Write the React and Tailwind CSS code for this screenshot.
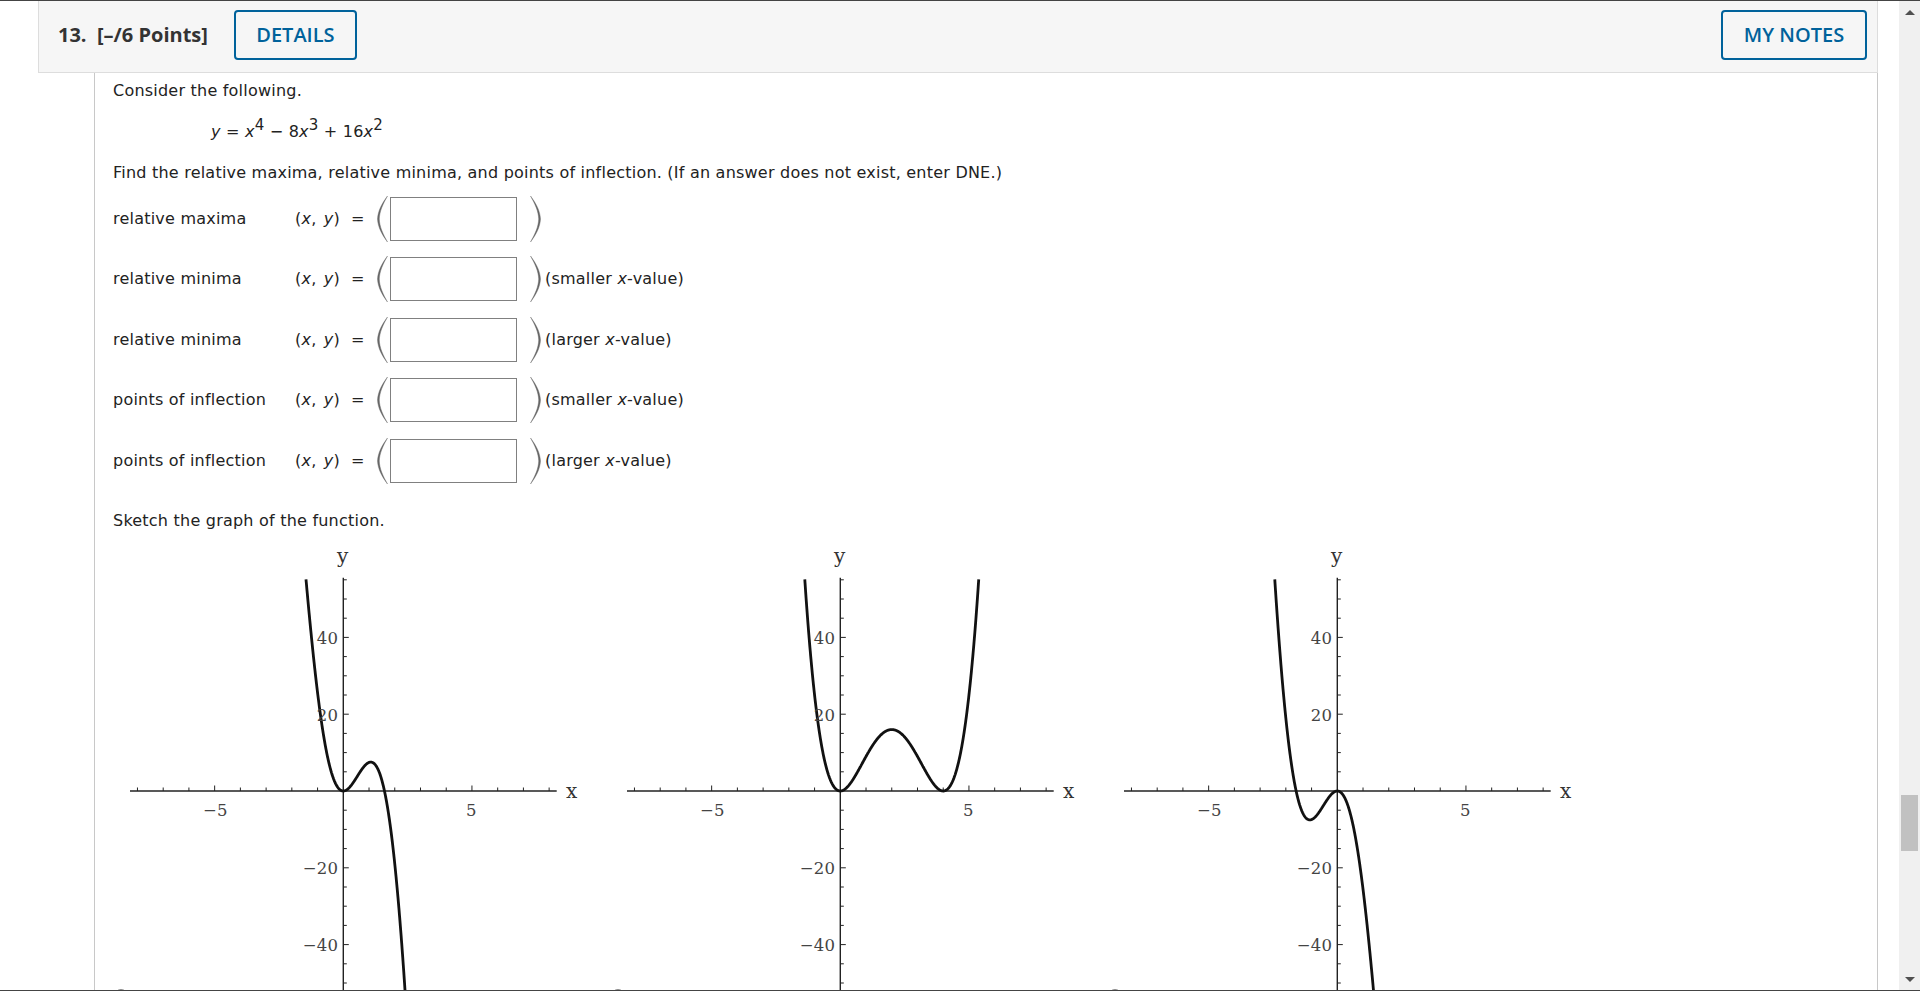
const xScale = 25.73
const yScale = 3.84
const originX = 230.3
const originY = 260

const range = (from, to, step) => {
  const out = []
  for (let v = from; v <= to + 1e-9; v += step) out.push(v)
  return out
}

// traced from the picture: x^2 (1.6 - x) (11.73 + 1.278x - 0.608x^2)
const leftHeavy = (x) => x * x * (1.6 - x) * (11.73 + 1.278 * x - 0.608 * x * x)

const curves = [
  { fn: leftHeavy, from: -1.7, to: 2.7 },
  { fn: (x) => x * x * (x - 4) * (x - 4), from: -1.7, to: 5.7 },
  { fn: (x) => -leftHeavy(-x), from: -2.7, to: 1.7 },
]

function curvePath({ fn, from, to }) {
  const pts = range(from, to, 0.01)
    .map((x) => [x, fn(x)])
    .filter(([, y]) => y <= 55.6)
    .map(([x, y]) => `${(originX + x * xScale).toFixed(2)},${(originY - y * yScale).toFixed(2)}`)
  return 'M' + pts.join('L')
}

function Graph({ curve }) {
  return (
    <div className="w-[497px] shrink-0">
      <svg width="497" height="458" viewBox="0 0 497 458" className="block overflow-visible">
        <g stroke="#222" fill="none">
          <line x1={originX - 213.3} y1={originY} x2={originX + 213.4} y2={originY} strokeWidth="1.4" />
          <line x1={originX} y1={46.7} x2={originX} y2={480} strokeWidth="1.4" />
          {range(-8, 8, 1).filter((t) => t !== 0).map((t) => (
            <line key={t} x1={originX + t * xScale} x2={originX + t * xScale} y1={originY} y2={originY - (Math.abs(t) === 5 ? 5.5 : 3.5)} strokeWidth="1" />
          ))}
          {range(-55, 55, 5).filter((t) => t !== 0).map((t) => (
            <line key={t} y1={originY - t * yScale} y2={originY - t * yScale} x1={originX} x2={originX + (Math.abs(t) % 20 === 0 ? 5.5 : 3.5)} strokeWidth="1" />
          ))}
        </g>
        <path d={curvePath(curve)} fill="none" stroke="#111" strokeWidth="2.8" strokeLinejoin="round" />
        <g className="font-['DejaVu_Serif',serif] text-[16.5px]" fill="#444">
          <text x={originX - 128} y={285} textAnchor="middle">−5</text>
          <text x={originX + 128} y={285} textAnchor="middle">5</text>
          {[40, 20, -20, -40].map((t) => (
            <text key={t} x={originX - 5} y={originY - t * yScale + 6.5} textAnchor="end">
              {t < 0 ? '−' + Math.abs(t) : t}
            </text>
          ))}
        </g>
        <g className="font-['DejaVu_Serif',serif] text-[20px]" fill="#333">
          <text x={originX - 0.6} y={32} textAnchor="middle">y</text>
          <text x={originX + 228.4} y={267} textAnchor="middle">x</text>
        </g>
      </svg>
      <input type="radio" className="block appearance-none ml-[1px] w-[14px] h-[14px] rounded-full border border-[#888] bg-white" />
    </div>
  )
}

function Paren({ right }) {
  return (
    <svg width="13" height="48" viewBox="0 0 13 48" className={right ? 'shrink-0 -scale-x-100' : 'shrink-0'}>
      <path
        d="M11.5 1C5.5 9 2 16 1.5 24C2 32 5.5 39 11.5 47C7 39 3.6 32 3.3 24C3.6 16 7 9 11.5 1Z"
        fill="#666"
        stroke="#666"
        strokeWidth="0.4"
      />
    </svg>
  )
}

function AnswerRow({ label, hint }) {
  return (
    <div className="flex items-center h-[60.5px]">
      <span className="w-[182px] shrink-0">{label}</span>
      <span className="w-[56px] shrink-0 whitespace-pre">
        (<i>x</i>, <i className="ml-[2px]">y</i>)
      </span>
      <span className="w-[25px] shrink-0">=</span>
      <Paren />
      <input type="text" className="ml-[1px] w-[127px] h-[44px] border border-[#808080] bg-white shrink-0" />
      <span className="ml-[12px]"><Paren right /></span>
      <span className="ml-[3px]">
        {hint && (
          <>
            ({hint} <i>x</i>-value)
          </>
        )}
      </span>
    </div>
  )
}

function OutlineButton({ children, className }) {
  return (
    <button className={`h-[50px] border-2 border-[#00629b] rounded-[4px] text-[#00629b] font-semibold text-[20px] ${className}`}>
      {children}
    </button>
  )
}

export default function App() {
  return (
    <div className="h-[991px] flex overflow-hidden bg-white border-y border-[#444] font-['DejaVu_Sans',sans-serif] text-[16px] tracking-[0.22px] leading-5 text-[#222]">
      <main className="flex-1 min-w-0 pl-[38px] pr-[21px] overflow-hidden">
        <header className="h-[72px] flex items-center pl-[19px] pr-[10px] pb-[4px] bg-[#f6f6f6] border-x border-b border-[#ddd] font-['Open_Sans',sans-serif] tracking-normal">
          <h2 className="text-[20px] font-bold text-[#333] whitespace-pre">13.  [–/6 Points]</h2>
          <OutlineButton className="ml-[26px] w-[123px]">DETAILS</OutlineButton>
          <OutlineButton className="ml-auto w-[146px]">MY NOTES</OutlineButton>
        </header>
        <section className="ml-[56px] pl-[18px] pt-2 border-x border-[#c8c8c8] h-[920px]">
          <p>Consider the following.</p>
          <p className="mt-[21px] ml-[98px]">
            <i>y</i> = <i>x</i>
            <sup className="text-[15px]">4</sup> − 8<i>x</i>
            <sup className="text-[15px]">3</sup> + 16<i>x</i>
            <sup className="text-[15px]">2</sup>
          </p>
          <p className="mt-[21px]">
            Find the relative maxima, relative minima, and points of inflection. (If an answer does not exist, enter DNE.)
          </p>
          <div className="mt-[5.5px]">
            <AnswerRow label="relative maxima" />
            <AnswerRow label="relative minima" hint="smaller" />
            <AnswerRow label="relative minima" hint="larger" />
            <AnswerRow label="points of inflection" hint="smaller" />
            <AnswerRow label="points of inflection" hint="larger" />
          </div>
          <p className="mt-5">Sketch the graph of the function.</p>
          <div className="flex">
            {curves.map((curve, i) => (
              <Graph key={i} curve={curve} />
            ))}
          </div>
        </section>
      </main>
      <aside className="w-[21px] shrink-0 flex flex-col items-center bg-[#f0f0f0] pt-[9px] pb-[8px]">
        <div className="w-0 h-0 border-x-[5px] border-x-transparent border-b-[5px] border-b-[#505050]" />
        <div className="w-[17px] h-[56px] bg-[#c1c1c1] mt-auto mb-[126px]" />
        <div className="w-0 h-0 border-x-[5px] border-x-transparent border-t-[5px] border-t-[#505050]" />
      </aside>
    </div>
  )
}
